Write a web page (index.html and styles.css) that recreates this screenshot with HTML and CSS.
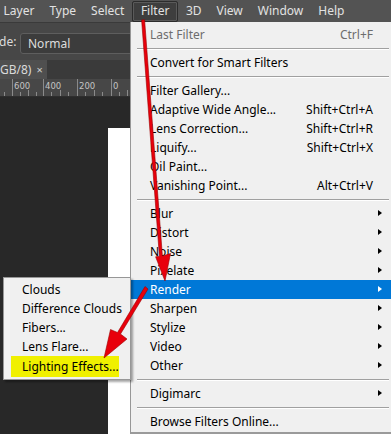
FILE: index.html
```html
<!DOCTYPE html>
<html lang="en">
<head>
  <meta charset="UTF-8">
  <title>Filter Render Menu</title>
  <link rel="stylesheet" href="styles.css">
</head>
<body>
  <div class="app">
    <div class="menubar">
      <span class="top-item first">Layer</span>
      <span class="top-item">Type</span>
      <span class="top-item">Select</span>
      <span class="top-item active">Filter</span>
      <span class="top-item">3D</span>
      <span class="top-item">View</span>
      <span class="top-item">Window</span>
      <span class="top-item">Help</span>
    </div>

    <div class="options-bar">
      <span class="opt-label">de:</span>
      <div class="blend-select">Normal</div>
    </div>

    <div class="tab-row">
      <div class="doc-tab">GB/8) <span class="tab-close">&times;</span></div>
    </div>

    <div class="ruler">
      <svg width="391" height="17" viewBox="0 0 391 17">
        <g stroke="#8a8a8a" stroke-width="1">
          <line x1="12.5" y1="0" x2="12.5" y2="17"/>
          <line x1="43.5" y1="0" x2="43.5" y2="17"/>
          <line x1="77.5" y1="0" x2="77.5" y2="17"/>
          <line x1="111.5" y1="0" x2="111.5" y2="17"/>
          <line x1="4.5" y1="13" x2="4.5" y2="17"/>
          <line x1="20.5" y1="13" x2="20.5" y2="17"/>
          <line x1="28.5" y1="11" x2="28.5" y2="17"/>
          <line x1="36.5" y1="13" x2="36.5" y2="17"/>
          <line x1="51.5" y1="13" x2="51.5" y2="17"/>
          <line x1="60.5" y1="11" x2="60.5" y2="17"/>
          <line x1="68.5" y1="13" x2="68.5" y2="17"/>
          <line x1="85.5" y1="13" x2="85.5" y2="17"/>
          <line x1="94.5" y1="11" x2="94.5" y2="17"/>
          <line x1="102.5" y1="13" x2="102.5" y2="17"/>
          <line x1="119.5" y1="13" x2="119.5" y2="17"/>
          <line x1="127.5" y1="11" x2="127.5" y2="17"/>
        </g>
        <g class="ruler-num">
          <text x="14" y="10">600</text>
          <text x="45" y="10">400</text>
          <text x="79" y="10">200</text>
          <text x="113" y="10">0</text>
        </g>
      </svg>
    </div>

    <div class="workspace">
      <div class="document"></div>
    </div>
  </div>

  <!-- Filter dropdown -->
  <div class="menu filter-menu">
    <div class="item disabled"><span class="label">Last Filter</span><span class="key">Ctrl+F</span></div>
    <div class="sep"></div>
    <div class="item"><span class="label">Convert for Smart Filters</span></div>
    <div class="sep"></div>
    <div class="item"><span class="label">Filter Gallery...</span></div>
    <div class="item"><span class="label">Adaptive Wide Angle...</span><span class="key">Shift+Ctrl+A</span></div>
    <div class="item"><span class="label">Lens Correction...</span><span class="key">Shift+Ctrl+R</span></div>
    <div class="item"><span class="label">Liquify...</span><span class="key">Shift+Ctrl+X</span></div>
    <div class="item"><span class="label">Oil Paint...</span></div>
    <div class="item"><span class="label">Vanishing Point...</span><span class="key">Alt+Ctrl+V</span></div>
    <div class="sep"></div>
    <div class="item sub"><span class="label">Blur</span></div>
    <div class="item sub"><span class="label">Distort</span></div>
    <div class="item sub"><span class="label">Noise</span></div>
    <div class="item sub"><span class="label">Pixelate</span></div>
    <div class="item sub selected"><span class="label">Render</span></div>
    <div class="item sub"><span class="label">Sharpen</span></div>
    <div class="item sub"><span class="label">Stylize</span></div>
    <div class="item sub"><span class="label">Video</span></div>
    <div class="item sub"><span class="label">Other</span></div>
    <div class="sep"></div>
    <div class="item sub"><span class="label">Digimarc</span></div>
    <div class="sep"></div>
    <div class="item"><span class="label">Browse Filters Online...</span></div>
  </div>

  <!-- Render submenu -->
  <div class="menu render-menu">
    <div class="item"><span class="label">Clouds</span></div>
    <div class="item"><span class="label">Difference Clouds</span></div>
    <div class="item"><span class="label">Fibers...</span></div>
    <div class="item"><span class="label">Lens Flare...</span></div>
    <div class="item marked"><span class="label">Lighting Effects...</span></div>
  </div>

  <!-- annotation arrows -->
  <svg class="arrows" width="391" height="434" viewBox="0 0 391 434">
    <g fill="#e8000b" stroke="#9a0000" stroke-width="0.6" stroke-linejoin="round">
      <path d="M141.6 20 L144.6 19.8 L162.4 256 L170.5 253.5 L165 281 L155.6 256.8 L159.4 256.2 Z"/>
      <path d="M145 286.5 L148 289 L120.5 334 L127 339 L104 358 L110.5 329.5 L117.5 332.5 Z"/>
    </g>
  </svg>
</body>
</html>
```

FILE: styles.css
```css
body {
  margin: 0;
  width: 391px;
  height: 434px;
  overflow: hidden;
  position: relative;
  background: #282828;
  font-family: "Noto Sans", "Open Sans", sans-serif;
}

.app {
  display: flex;
  flex-direction: column;
  height: 434px;
  overflow: hidden;
}
.app > div { flex-shrink: 0; }

/* top menu bar */
.menubar {
  height: 22px;
  background: #535353;
  display: flex;
  align-items: center;
  color: #e2e2e2;
  font-size: 12px;
}
.top-item {
  padding: 1px 6.5px 2px;
  border: 1px solid transparent;
  border-radius: 2px;
  line-height: 16px;
}
.top-item.first { margin-left: -4px; }
.top-item.active {
  background: #3e3e3e;
  border-color: #2c2c2c;
  box-shadow: inset 0 0 0 1px #5a5a5a;
  padding: 1px 8px 2px;
}

/* options bar */
.options-bar {
  height: 38px;
  background: #474747;
  border-top: 1px solid #3a3a3a;
  display: flex;
  align-items: center;
  color: #dcdcdc;
  font-size: 12px;
  box-sizing: border-box;
}
.opt-label { margin-left: -1px; width: 21px; }
.blend-select {
  width: 130px;
  height: 21px;
  box-sizing: border-box;
  background: #3c3c3c;
  border: 1px solid #5e5e5e;
  border-radius: 3px;
  padding-left: 7px;
  line-height: 19px;
  margin-top: 3px;
}

/* tabs */
.tab-row {
  height: 19px;
  background: #3a3a3a;
  display: flex;
}
.doc-tab {
  width: 47px;
  background: #4f4f4f;
  color: #dadada;
  font-size: 12px;
  line-height: 19px;
  white-space: nowrap;
  overflow: hidden;
}
.tab-close { font-size: 11px; margin-left: 2px; color: #cfcfcf; }

/* ruler */
.ruler {
  height: 17px;
  background: #474747;
  border-bottom: 1px solid #2e2e2e;
}
.ruler svg { display: block; }
.ruler-num text {
  fill: #c4c4c4;
  font-family: "DejaVu Sans", sans-serif;
  font-size: 8.5px;
}

/* canvas */
.workspace {
  flex: 1;
  background: #282828;
  overflow: hidden;
}
.document {
  margin: 31px 0 0 108px;
  width: 30px;
  height: 400px;
  background: #ffffff;
}

/* dropdown menus */
.menu {
  position: absolute;
  background: #f0f0f0;
  border: 1px solid #979797;
  box-shadow: 2px 2px 2px rgba(0, 0, 0, 0.35);
  font-size: 12px;
  color: #000;
  box-sizing: border-box;
}
.item {
  height: 19px;
  display: flex;
  align-items: center;
  position: relative;
  white-space: nowrap;
}
.item .label { flex: 1; }
.item.disabled { color: #6d6d6d; }
.sep {
  height: 1px;
  background: #a0a0a0;
  border-bottom: 1px solid #ffffff;
  margin: 4px 6px 3px 6px;
}

.filter-menu {
  left: 130px;
  top: 22px;
  width: 266px;
  height: 412px;
  padding: 3px 0 0 0;
  border-top: none;
  border-bottom: 2px solid #9a9a9a;
}
.filter-menu .item { padding: 0 22px 0 19px; }
.filter-menu .item.sub::after {
  content: "";
  position: absolute;
  right: 13px;
  top: 6px;
  border-left: 4px solid #000;
  border-top: 3.5px solid transparent;
  border-bottom: 3.5px solid transparent;
}
.filter-menu .item.selected {
  background: #0078d7;
  color: #fff;
}
.filter-menu .item.selected::after { border-left-color: #fff; }

.render-menu {
  left: 3px;
  top: 277px;
  width: 128px;
  padding: 2px 0 2px 0;
  z-index: 2;
}
.render-menu .item { padding-left: 18px; }
.render-menu .item.marked {
  background: #f0f000;
  margin: 0 11px 0 7px;
  padding-left: 11px;
  height: 21px;
}

.arrows {
  position: absolute;
  left: 0;
  top: 0;
  pointer-events: none;
  z-index: 3;
}
```
